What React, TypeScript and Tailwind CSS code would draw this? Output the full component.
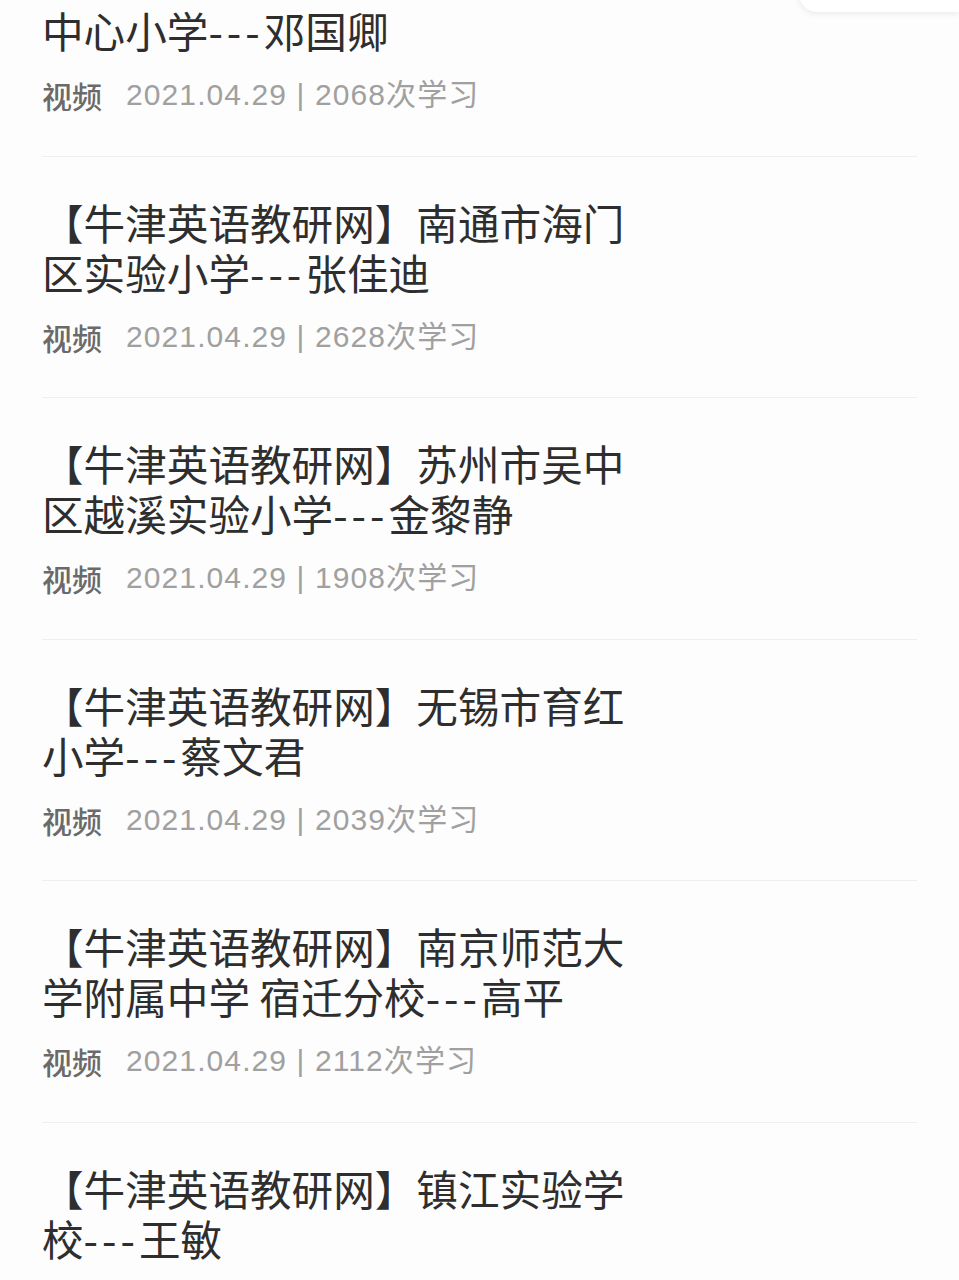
import React from 'react';

const items = [
  { lines: ['中心小学---邓国卿'], views: 2068 },
  { lines: ['【牛津英语教研网】南通市海门', '区实验小学---张佳迪'], views: 2628 },
  { lines: ['【牛津英语教研网】苏州市吴中', '区越溪实验小学---金黎静'], views: 1908 },
  { lines: ['【牛津英语教研网】无锡市育红', '小学---蔡文君'], views: 2039 },
  { lines: ['【牛津英语教研网】南京师范大', '学附属中学 宿迁分校---高平'], views: 2112 },
  { lines: ['【牛津英语教研网】镇江实验学', '校---王敏'], views: 1874 },
];

const cjk = { fontFamily: '"PingFang SC", "Noto Sans CJK SC", "Noto Sans", sans-serif' };
const meta = { fontFamily: '"Liberation Sans", "Noto Sans CJK SC", sans-serif' };

// dashes in the reference are wider than Noto's hyphen
const Line: React.FC<{ text: string }> = ({ text }) => {
  const parts = text.split('---');
  if (parts.length === 1) return <div className="whitespace-nowrap">{text}</div>;
  return (
    <div className="whitespace-nowrap">
      {parts[0]}
      <span className="tracking-[4px]">---</span>
      {parts[1]}
    </div>
  );
};

export default function App() {
  return (
    <div className="relative h-[1280px] overflow-hidden bg-[#fdfdfd]" style={cjk}>
      <div className="absolute right-0 top-[-40px] h-[52px] w-[160px] rounded-bl-[18px] rounded-tl-[18px] bg-white shadow-[0_2px_6px_rgba(0,0,0,0.08)]" />
      <div className="px-[42px]">
        {items.map((item, idx) => (
          <div
            key={idx}
            className={`border-b border-[#efefef] pb-[40.5px] ${idx === 0 ? 'pt-[5px]' : 'pt-[40px]'}`}
          >
            <div className="text-[41.6px] leading-[50px] text-[#2e2e2e]">
              {item.lines.map((l, i) => (
                <Line key={i} text={l} />
              ))}
            </div>
            <div className="mt-[20px] flex items-center text-[30px] leading-[40px]">
              <span className="font-medium text-[#6a6a6a]" style={cjk}>视频</span>
              <span className="ml-[24px] tracking-[1.1px] text-[#a0a0a0]" style={meta}>
                2021.04.29 | {item.views}次学习
              </span>
            </div>
          </div>
        ))}
      </div>
    </div>
  );
}
